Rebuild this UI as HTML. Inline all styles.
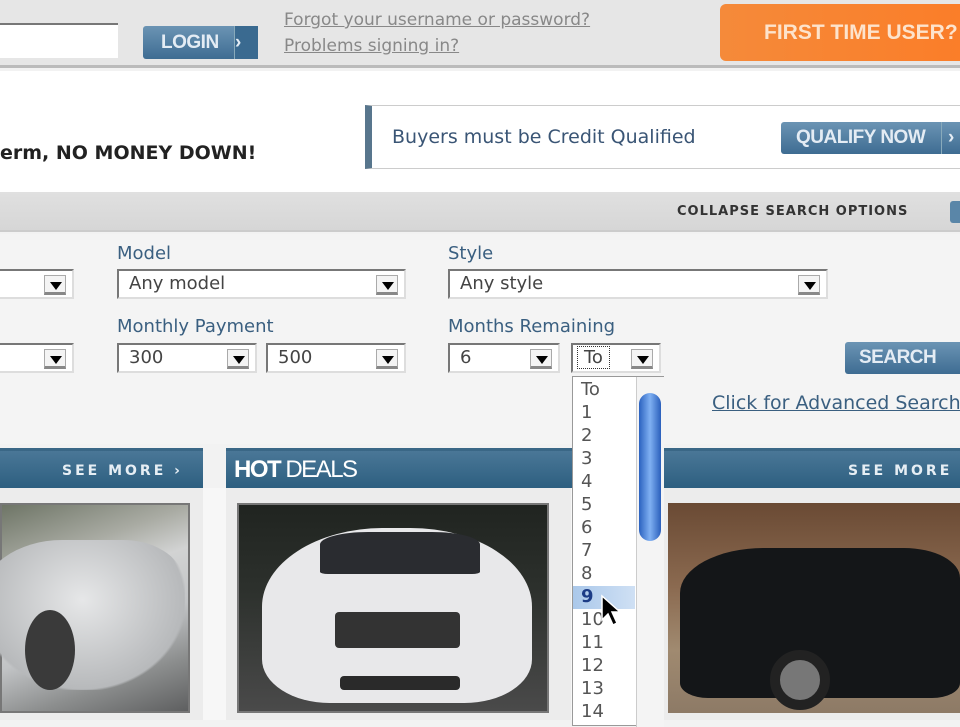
<!DOCTYPE html>
<html><head><style>
*{margin:0;padding:0;box-sizing:border-box}
body{width:960px;height:720px;overflow:hidden;position:relative;background:#f2f2f2;font-family:"DejaVu Sans","Liberation Sans",sans-serif;color:#333}
.a{position:absolute}
.sel{position:absolute;height:30px;background:#fff;border:2px solid #777;border-right-color:#ddd;border-bottom-color:#ddd;font-size:18px;color:#444;padding:2px 10px;line-height:22px}
.sel .ar{position:absolute;right:6px;top:4px;width:22px;height:20px;border:1px solid #aaa;border-bottom:3px solid #888;background:#f4f4f4}
.sel .ar:after{content:"";position:absolute;left:5px;top:6px;border-left:6px solid transparent;border-right:6px solid transparent;border-top:8px solid #000}
.lbl{position:absolute;font-size:18px;color:#3a5f80}
.btn{position:absolute;background:linear-gradient(#6b94b4,#3e6c92);color:#e4ecf4;font-family:"Liberation Sans",sans-serif;font-weight:bold;font-size:19px;border-radius:3px;text-align:center;letter-spacing:-0.5px}
.hdr{position:absolute;top:448px;height:40px;background:linear-gradient(#4a7797,#2d5f80);border-top:3px solid #3a6786}
.see{position:absolute;top:12px;color:#e6eef4;font-size:14px;font-weight:bold;letter-spacing:3px}
.li{height:23px;font-size:18px;color:#555;padding-left:8px}
</style></head><body>
<div class="a" style="left:0;top:0;width:960px;height:68px;background:#e6e6e6;border-bottom:3px solid #bbb"></div>
<div class="a" style="left:0;top:23px;width:118px;height:35px;background:#fff;border-top:2px solid #777"></div>
<div class="btn" style="left:143px;top:26px;width:115px;height:33px;line-height:33px;text-align:left;padding-left:18px">LOGIN<span style="position:absolute;right:0;top:0;width:24px;height:33px;background:#3a6a90;border-left:1px solid #8ab">›</span></div>
<div class="a" style="left:284px;top:10px;font-size:17px;color:#888;text-decoration:underline">Forgot your username or password?</div>
<div class="a" style="left:284px;top:36px;font-size:17px;color:#888;text-decoration:underline">Problems signing in?</div>
<div class="a" style="left:720px;top:4px;width:250px;height:57px;border-radius:6px;background:linear-gradient(90deg,#f58a3a,#fb7d28);color:#fde3cc;font-family:'Liberation Sans',sans-serif;font-weight:bold;font-size:21px;line-height:57px;padding-left:44px">FIRST TIME USER?</div>
<div class="a" style="left:0;top:71px;width:960px;height:121px;background:#fff"></div>
<div class="a" style="left:0;top:142px;font-size:19px;font-weight:bold;color:#222">erm, NO MONEY DOWN!</div>
<div class="a" style="left:365px;top:105px;width:600px;height:64px;border:1px solid #ccc;border-left:7px solid #58768d;background:#fff"></div>
<div class="a" style="left:392px;top:126px;font-size:19px;color:#3a5575">Buyers must be Credit Qualified</div>
<div class="btn" style="left:781px;top:122px;width:190px;height:32px;line-height:32px;text-align:left;padding-left:15px">QUALIFY NOW<span style="position:absolute;left:160px;top:0;width:30px;height:32px;border-left:1px solid #8ab;padding-left:6px">›</span></div>
<div class="a" style="left:0;top:192px;width:960px;height:40px;background:linear-gradient(#e0e0e0,#d6d6d6);border-bottom:2px solid #ccc"></div>
<div class="a" style="left:677px;top:204px;font-size:13px;font-weight:bold;letter-spacing:1px;color:#333">COLLAPSE SEARCH OPTIONS</div>
<div class="a" style="left:950px;top:201px;width:14px;height:22px;background:#5a86a8;border-radius:3px"></div>
<div class="a" style="left:0;top:234px;width:960px;height:210px;background:#f4f4f4"></div>
<div class="lbl" style="left:117px;top:243px">Model</div>
<div class="lbl" style="left:448px;top:243px">Style</div>
<div class="sel" style="left:-10px;top:269px;width:84px"><div class="ar"></div></div>
<div class="sel" style="left:117px;top:269px;width:289px">Any model<div class="ar"></div></div>
<div class="sel" style="left:448px;top:269px;width:380px">Any style<div class="ar"></div></div>
<div class="lbl" style="left:117px;top:316px">Monthly Payment</div>
<div class="lbl" style="left:448px;top:316px">Months Remaining</div>
<div class="sel" style="left:-10px;top:343px;width:84px"><div class="ar"></div></div>
<div class="sel" style="left:117px;top:343px;width:140px">300<div class="ar"></div></div>
<div class="sel" style="left:266px;top:343px;width:140px">500<div class="ar"></div></div>
<div class="sel" style="left:448px;top:343px;width:112px">6<div class="ar"></div></div>
<div class="sel" style="left:571px;top:343px;width:90px;padding-left:4px"><span style="border:1px dotted #333;padding:0 6px">To</span><div class="ar"></div></div>
<div class="btn" style="left:845px;top:342px;width:130px;height:32px;line-height:32px;text-align:left;padding-left:14px">SEARCH</div>
<div class="a" style="left:712px;top:392px;font-size:19px;color:#3a5f80;text-decoration:underline;white-space:nowrap">Click for Advanced Search</div>
<div class="a" style="left:0;top:488px;width:960px;height:232px;background:#f7f7f7"></div>
<div class="hdr" style="left:0;width:203px"><span class="see" style="left:62px">SEE MORE ›</span></div>
<div class="hdr" style="left:226px;width:740px"><span class="a" style="left:8px;top:5px;color:#fff;font-size:24px;font-family:'Liberation Sans',sans-serif;letter-spacing:-1.5px"><b>HOT</b> DEALS</span><span class="see" style="left:622px">SEE MORE</span></div>
<div class="a" style="left:0;top:488px;width:203px;height:232px;background:#ececec"></div>
<div class="a" style="left:226px;top:488px;width:345px;height:232px;background:#ececec"></div>
<div class="a" style="left:662px;top:488px;width:300px;height:232px;background:#ececec"></div>
<div class="a" style="left:0;top:503px;width:190px;height:210px;border:2px solid #777;background:linear-gradient(160deg,#6e7566 0%,#a9aba3 25%,#d2d3d3 40%,#c2c4c6 60%,#8c8e8e 80%,#5e5f60 100%)"></div>
<div class="a" style="left:-20px;top:540px;width:205px;height:150px;border-radius:40% 30% 20% 20%;background:radial-gradient(ellipse at 50% 40%,#e6e7e8,#b7b9bb 70%,transparent 72%)"></div>
<div class="a" style="left:25px;top:610px;width:50px;height:80px;border-radius:50%;background:#3a3a3a"></div>
<div class="a" style="left:237px;top:503px;width:312px;height:210px;border:2px solid #777;background:linear-gradient(#202420,#2c302c 40%,#4a4a4a)"></div>
<div class="a" style="left:262px;top:528px;width:270px;height:175px;border-radius:45% 45% 25% 25%;background:#e8e8ea"></div>
<div class="a" style="left:320px;top:532px;width:160px;height:42px;border-radius:30% 30% 5% 5%;background:#2a2c30"></div>
<div class="a" style="left:335px;top:612px;width:125px;height:36px;background:#333;border-radius:4px"></div>
<div class="a" style="left:340px;top:676px;width:120px;height:14px;background:#2a2a2a;border-radius:4px"></div>
<div class="a" style="left:668px;top:503px;width:295px;height:210px;background:linear-gradient(#6a4a34,#8b6a50 40%,#a08a70 70%,#8d7a66)"></div>
<div class="a" style="left:680px;top:548px;width:280px;height:150px;border-radius:30% 20% 10% 10%;background:#141618"></div>
<div class="a" style="left:770px;top:650px;width:60px;height:60px;border-radius:50%;background:#777;border:10px solid #222"></div>
<div class="a" style="left:572px;top:376px;width:92px;height:350px;background:#fff;border:1px solid #999">
<div style="padding-top:2px">
<div class="li">To</div><div class="li">1</div><div class="li">2</div><div class="li">3</div><div class="li">4</div><div class="li">5</div><div class="li">6</div><div class="li">7</div><div class="li">8</div><div class="li" style="background:linear-gradient(90deg,#aac8ea,#cfe0f4);color:#1c3c86;font-weight:bold;margin-right:28px">9</div><div class="li">10</div><div class="li">11</div><div class="li">12</div><div class="li">13</div><div class="li">14</div>
</div>
<div class="a" style="left:63px;top:0;width:28px;height:350px;background:#f4f4f4;border-left:1px solid #ccc"></div>
<div class="a" style="left:66px;top:16px;width:22px;height:148px;border-radius:11px;background:linear-gradient(90deg,#2b62c0,#7fb0f2 50%,#2a5fbc)"></div>
</div>
<svg class="a" style="left:600px;top:594px" width="24" height="34" viewBox="0 0 24 34"><path d="M2 2 L2 26 L8 20 L13 31 L17 29 L12 18 L20 18 Z" fill="#000" stroke="#fff" stroke-width="1.5"/></svg>
</body></html>
